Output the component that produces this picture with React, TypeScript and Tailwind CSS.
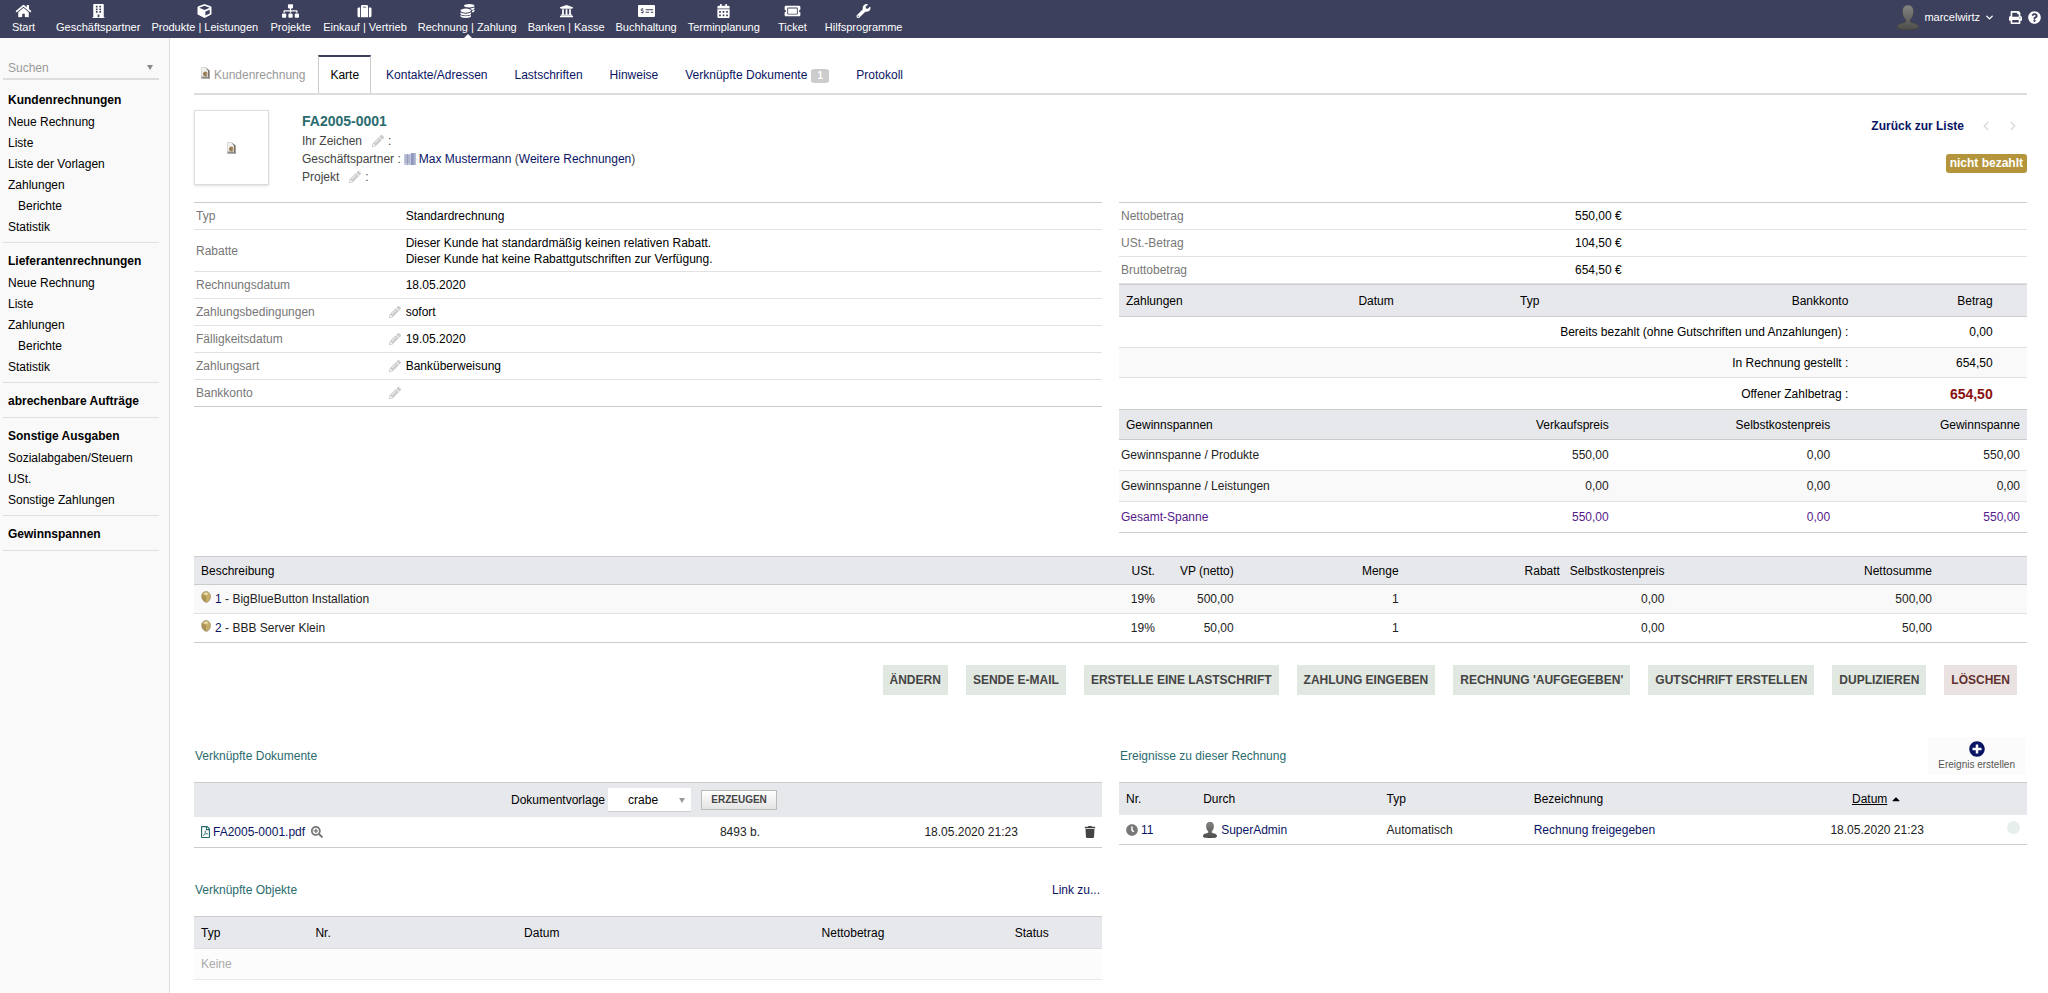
import { ReactNode, useState } from 'react'
import { ChevronDown, ChevronLeft, ChevronRight } from 'lucide-react'
import {
  FaBuilding,
  FaCalendarAlt,
  FaCaretUp,
  FaClock,
  FaCoins,
  FaCube,
  FaHome,
  FaMoneyCheckAlt,
  FaPencilAlt,
  FaPlusCircle,
  FaPrint,
  FaQuestionCircle,
  FaRegFilePdf,
  FaSearchPlus,
  FaSitemap,
  FaSuitcase,
  FaTicketAlt,
  FaTrash,
  FaUniversity,
  FaWrench,
} from 'react-icons/fa'

const navItems = [
  { label: 'Start', icon: FaHome },
  { label: 'Geschäftspartner', icon: FaBuilding },
  { label: 'Produkte | Leistungen', icon: FaCube },
  { label: 'Projekte', icon: FaSitemap },
  { label: 'Einkauf | Vertrieb', icon: FaSuitcase },
  { label: 'Rechnung | Zahlung', icon: FaCoins, active: true },
  { label: 'Banken | Kasse', icon: FaUniversity },
  { label: 'Buchhaltung', icon: FaMoneyCheckAlt },
  { label: 'Terminplanung', icon: FaCalendarAlt },
  { label: 'Ticket', icon: FaTicketAlt },
  { label: 'Hilfsprogramme', icon: FaWrench },
]

const menuBlocks = [
  {
    title: 'Kundenrechnungen',
    items: ['Neue Rechnung', 'Liste', 'Liste der Vorlagen', 'Zahlungen', 'Berichte', 'Statistik'],
  },
  {
    title: 'Lieferantenrechnungen',
    items: ['Neue Rechnung', 'Liste', 'Zahlungen', 'Berichte', 'Statistik'],
  },
  { title: 'abrechenbare Aufträge', items: [] },
  { title: 'Sonstige Ausgaben', items: ['Sozialabgaben/Steuern', 'USt.', 'Sonstige Zahlungen'] },
  { title: 'Gewinnspannen', items: [] },
]

const tabs = ['Karte', 'Kontakte/Adressen', 'Lastschriften', 'Hinweise', 'Verknüpfte Dokumente', 'Protokoll']

const details: { label: string; value: ReactNode; edit?: boolean }[] = [
  { label: 'Typ', value: 'Standardrechnung' },
  {
    label: 'Rabatte',
    value: (
      <>
        Dieser Kunde hat standardmäßig keinen relativen Rabatt.
        <br />
        Dieser Kunde hat keine Rabattgutschriften zur Verfügung.
      </>
    ),
  },
  { label: 'Rechnungsdatum', value: '18.05.2020' },
  { label: 'Zahlungsbedingungen', value: 'sofort', edit: true },
  { label: 'Fälligkeitsdatum', value: '19.05.2020', edit: true },
  { label: 'Zahlungsart', value: 'Banküberweisung', edit: true },
  { label: 'Bankkonto', value: '', edit: true },
]

const amounts = [
  ['Nettobetrag', '550,00 €'],
  ['USt.-Betrag', '104,50 €'],
  ['Bruttobetrag', '654,50 €'],
]

const margins = [
  ['Gewinnspanne / Produkte', '550,00', '0,00', '550,00'],
  ['Gewinnspanne / Leistungen', '0,00', '0,00', '0,00'],
  ['Gesamt-Spanne', '550,00', '0,00', '550,00'],
]

const lines = [
  { id: '1', name: 'BigBlueButton Installation', vat: '19%', price: '500,00', qty: '1', cost: '0,00', total: '500,00' },
  { id: '2', name: 'BBB Server Klein', vat: '19%', price: '50,00', qty: '1', cost: '0,00', total: '50,00' },
]

const actions = [
  'ÄNDERN',
  'SENDE E-MAIL',
  'ERSTELLE EINE LASTSCHRIFT',
  'ZAHLUNG EINGEBEN',
  "RECHNUNG 'AUFGEGEBEN'",
  'GUTSCHRIFT ERSTELLEN',
  'DUPLIZIEREN',
]

const tableClass = 'w-full table-fixed border-separate border-spacing-0'
const headClass = 'bg-[#e7e8ec] px-[7px] font-normal text-black'
const linkClass = 'text-[#0a1464]'

const Avatar = ({ className }: { className: string }) => (
  <svg viewBox="0 0 22 25" className={className} aria-hidden="true">
    <defs>
      <linearGradient id="avatar" x1="0" y1="0" x2="0" y2="1">
        <stop offset="0" stopColor="#858585" />
        <stop offset="1" stopColor="#4c4d49" />
      </linearGradient>
    </defs>
    <path
      d="M11 0C7 0 5.200 3 5.400 7c.200 3.500 1.400 6 3.100 7.500v2.300C7 18.300 1.500 17.800.300 21c-.8 2.500 1 4 10.700 4s11.500-1.500 10.700-4c-1.200-3.200-6.700-2.700-8.200-4.200v-2.300c1.700-1.500 2.900-4 3.100-7.500C16.800 3 15 0 11 0z"
      fill="url(#avatar)"
      stroke="#3d3e3b"
      strokeWidth=".6"
    />
  </svg>
)

// 請求書アイコン
const BillIcon = ({ className }: { className: string }) => (
  <svg viewBox="0 0 9 12" className={className} aria-hidden="true">
    <path d="M.5.5h4l4 3v8h-8z" fill="#f1f1f0" stroke="#c4c4c2" strokeWidth=".6" />
    <path d="M4.500.5 8.500 3.500v8h-1.500V4z" fill="#77736c" />
    <path d="M.5 9.500h8v2h-8z" fill="#8d8a84" />
    <circle cx="4.300" cy="7" r="2.400" fill="#b99a70" />
    <path d="M5.500 5.600c-1.500-.8-2.500.2-2.500 1.400s1 2.200 2.500 1.400M2.600 7h2.200" fill="none" stroke="#6b5436" strokeWidth=".6" />
  </svg>
)

const CompanyIcon = () => (
  <svg viewBox="0 0 12 12" className="w-3 h-3 inline-block" aria-hidden="true">
    <path d="M0 1h7v11H0z" fill="#c3c7de" />
    <path d="M1 3h5M1 5h5M1 7h5M1 9h5M3.500 1v11" stroke="#8d93b5" strokeWidth=".7" />
    <path d="M7 0h4.500v12H7z" fill="#8f96bd" />
    <path d="M9.500 0h2v12h-2z" fill="#a9afcf" />
  </svg>
)

const ProductIcon = () => (
  <svg viewBox="0 0 10 12" className="w-[10px] h-3 shrink-0 mb-1" aria-hidden="true">
    <path d="M5 .5C7.500.5 9.500 2.500 9.500 5.500S7.500 11 5.500 11.500C3 11 .8 8.500.6 5.500.5 2.500 2.500.5 5 .5z" fill="#c7ad68" stroke="#8e8361" strokeWidth=".6" />
    <path d="M1 3.600 5 5v6.200C2.800 10.500 1.200 8.500 1 6z" fill="#a99355" />
    <path d="M2 2.800 5 1.300l2.800 1.500L5 4.300z" fill="#e9dcae" />
  </svg>
)

const Pencil = () => <FaPencilAlt className="w-3 h-3 text-[#cccccc]" />

const SectionTitle = ({ title, children }: { title: string; children?: ReactNode }) => (
  <div className="flex justify-between items-center h-[38px] mb-[7px] pl-px pr-[2px]">
    <h2 className="text-[12px] text-[#2a6b6e]">{title}</h2>
    {children}
  </div>
)

const TopBar = () => (
  <header className="flex justify-between h-[38px] bg-[#3c405c] text-white text-[11px]">
    <nav className="flex -ml-[3px]">
      {navItems.map(({ label, icon: Icon, active }) => (
        <a
          key={label}
          href="#"
          className="relative flex flex-col items-center min-w-[54px] pl-[5px] pr-[6px] pt-1 whitespace-nowrap"
        >
          <Icon className="h-[14px] w-[17px]" />
          <span className="leading-4 mt-px">{label}</span>
          {active && (
            <span className="absolute bottom-0 left-1/2 -translate-x-1/2 border-x-4 border-b-4 border-x-transparent border-b-white" />
          )}
        </a>
      ))}
    </nav>
    <div className="flex items-center pr-[7px] pb-1">
      <Avatar className="w-[22px] h-[25px]" />
      <button type="button" className="flex items-center gap-1 ml-[5px] mr-[14px]">
        marcelwirtz
        <ChevronDown size={11} strokeWidth={3} />
      </button>
      <a href="#" aria-label="Drucken" className="mr-[6px]">
        <FaPrint size={13} />
      </a>
      <a href="#" aria-label="Hilfe">
        <FaQuestionCircle size={13} />
      </a>
    </div>
  </header>
)

const SideMenu = () => (
  <aside className="w-[170px] shrink-0 bg-[#f9f9f9] border-r border-[#dcdcdc] pl-[3px] pr-[10px] pt-[19px]">
    <div className="relative border-b-2 border-[#dddddd] mb-[2px]">
      <select
        aria-label="Suchen"
        className="appearance-none w-full h-[21px] pl-[5px] bg-transparent text-[#999999] outline-none"
      >
        <option>Suchen</option>
      </select>
      <span className="absolute right-[6px] top-2 border-x-[3px] border-t-[5px] border-x-transparent border-t-[#888888] pointer-events-none" />
    </div>
    {menuBlocks.map((block) => (
      <div key={block.title} className="border-b border-[#e0e0e0] pt-[7px] pb-1 pl-[5px]">
        <a href="#" className="block h-[23px] leading-[22px] font-bold whitespace-nowrap">
          {block.title}
        </a>
        {block.items.map((item) => (
          <a
            key={item}
            href="#"
            className={`block h-[21px] leading-[21px] whitespace-nowrap ${item === 'Berichte' ? 'pl-[10px]' : ''}`}
          >
            {item}
          </a>
        ))}
      </div>
    ))}
  </aside>
)

const App = () => {
  const [template, setTemplate] = useState('crabe')

  return (
    <div className="min-h-screen flex flex-col bg-white text-black text-[12px] leading-4 font-['Liberation_Sans',Arial,sans-serif]">
      <TopBar />
      <div className="flex flex-1">
        <SideMenu />
        <main className="flex-1 min-w-0 pl-6 pr-[21px] pt-[17px] pb-3">
          <div className="flex gap-[3px] border-b-2 border-[#dddddd]">
            <div className="flex items-center gap-1 h-[38px] pt-[2px] pl-[7px] pr-[10px] text-[#999999]">
              <BillIcon className="w-[9px] h-3 mb-1" />
              Kundenrechnung
            </div>
            {tabs.map((tab) => (
              <a
                key={tab}
                href="#"
                className={
                  tab === 'Karte'
                    ? 'flex items-center h-[38px] px-[11px] border-t-2 border-t-[#3c405c] border-x border-x-[#cccccc]'
                    : 'flex items-center h-[38px] pt-[2px] px-3 text-[#0a1464]'
                }
              >
                {tab}
                {tab === 'Verknüpfte Dokumente' && (
                  <span className="ml-1 mt-px w-[18px] h-[14px] rounded-[3px] bg-[#cccccc] text-white text-[10px] leading-[14px] font-bold text-center">
                    1
                  </span>
                )}
              </a>
            ))}
          </div>

          <div className="flex mt-[15px] h-[75px]">
            <div className="flex items-center justify-center w-[75px] h-[75px] border border-[#dddddd] shadow-sm">
              <BillIcon className="w-[9px] h-3" />
            </div>
            <div className="ml-[33px] text-[#444444] leading-[18px]">
              <h1 className="h-[22px] leading-[22px] text-[14px] font-bold text-[#2a6b6e]">FA2005-0001</h1>
              <div className="flex items-center">
                Ihr Zeichen
                <a href="#" aria-label="Ihr Zeichen bearbeiten" className="ml-[10px] mr-1">
                  <Pencil />
                </a>
                :
              </div>
              <div className="flex items-center">
                Geschäftspartner :
                <span className="mx-[3px] flex">
                  <CompanyIcon />
                </span>
                <a href="#" className={linkClass}>
                  Max Mustermann
                </a>
                &nbsp;(
                <a href="#" className={linkClass}>
                  Weitere Rechnungen
                </a>
                )
              </div>
              <div className="flex items-center">
                Projekt
                <a href="#" aria-label="Projekt bearbeiten" className="ml-[10px] mr-1">
                  <Pencil />
                </a>
                :
              </div>
            </div>
            <div className="ml-auto flex flex-col items-end">
              <div className="flex items-center h-8 pr-[7px]">
                <a href="#" className="font-bold text-[#0a1464] mr-[15px]">
                  Zurück zur Liste
                </a>
                <ChevronLeft size={14} strokeWidth={3} className="text-[#dddddd] mr-[13px]" />
                <ChevronRight size={14} strokeWidth={3} className="text-[#dddddd]" />
              </div>
              <span className="mt-3 px-1 h-[19px] leading-[19px] rounded-[3px] bg-[#b5953c] text-white font-bold">
                nicht bezahlt
              </span>
            </div>
          </div>

          <div className="flex gap-[17px] mt-[17px] items-start">
            <table className={`${tableClass} flex-1 border-t border-[#cccccc]`}>
              <colgroup>
                <col className="w-[23.2%]" />
                <col />
              </colgroup>
              <tbody>
                {details.map((row, i) => (
                  <tr key={row.label} className={row.label === 'Rabatte' ? 'h-[42px]' : 'h-[27px]'}>
                    <td
                      className={`border-b pl-[2px] pr-1 text-[#777777] ${i === details.length - 1 ? 'border-[#cccccc]' : 'border-[#e2e2e2]'}`}
                    >
                      <div className="flex justify-between items-center">
                        {row.label}
                        {row.edit && (
                          <a href="#" aria-label={`${row.label} bearbeiten`}>
                            <Pencil />
                          </a>
                        )}
                      </div>
                    </td>
                    <td className={`border-b pl-px ${i === details.length - 1 ? 'border-[#cccccc]' : 'border-[#e2e2e2]'}`}>
                      {row.value}
                    </td>
                  </tr>
                ))}
              </tbody>
            </table>

            <div className="w-full flex-1">
              <table className={`${tableClass} border-t border-[#cccccc]`}>
                <tbody>
                  {amounts.map(([label, value]) => (
                    <tr key={label} className="h-[27px]">
                      <td className="border-b border-[#e2e2e2] pl-[2px] text-[#777777]">{label}</td>
                      <td className="border-b border-[#e2e2e2] pl-[2px]">{value}</td>
                    </tr>
                  ))}
                </tbody>
              </table>

              <table className={tableClass}>
                <colgroup>
                  <col className="w-[25.6%]" />
                  <col className="w-[17.8%]" />
                  <col className="w-[17.6%]" />
                  <col className="w-[20.1%]" />
                  <col className="w-[15.9%]" />
                  <col />
                </colgroup>
                <thead>
                  <tr className="h-[33px]">
                    <th className={`${headClass} border-y border-[#cccccc] text-left`}>Zahlungen</th>
                    <th className={`${headClass} border-y border-[#cccccc] text-left`}>Datum</th>
                    <th className={`${headClass} border-y border-[#cccccc] text-left`}>Typ</th>
                    <th className={`${headClass} border-y border-[#cccccc] text-right`}>Bankkonto</th>
                    <th className={`${headClass} border-y border-[#cccccc] text-right`}>Betrag</th>
                    <th className={`${headClass} border-y border-[#cccccc]`} />
                  </tr>
                </thead>
                <tbody>
                  <tr className="h-[31px] text-right">
                    <td colSpan={4} className="border-b border-[#e2e2e2] px-[7px]">
                      Bereits bezahlt (ohne Gutschriften und Anzahlungen) :
                    </td>
                    <td className="border-b border-[#e2e2e2] px-[7px]">0,00</td>
                    <td className="border-b border-[#e2e2e2]" />
                  </tr>
                  <tr className="h-[30px] text-right bg-[#f9f9f9]">
                    <td colSpan={4} className="border-b border-[#e2e2e2] px-[7px]">
                      In Rechnung gestellt :
                    </td>
                    <td className="border-b border-[#e2e2e2] px-[7px]">654,50</td>
                    <td className="border-b border-[#e2e2e2]" />
                  </tr>
                  <tr className="h-[31px] text-right">
                    <td colSpan={4} className="px-[7px]">
                      Offener Zahlbetrag :
                    </td>
                    <td className="px-[7px] text-[14px] font-bold text-[#8a1010]">654,50</td>
                    <td />
                  </tr>
                </tbody>
              </table>

              <table className={tableClass}>
                <colgroup>
                  <col className="w-[30.3%]" />
                  <col className="w-[24.4%]" />
                  <col className="w-[24.4%]" />
                  <col />
                </colgroup>
                <thead>
                  <tr className="h-[31px]">
                    <th className={`${headClass} border-y border-[#cccccc] text-left`}>Gewinnspannen</th>
                    <th className={`${headClass} border-y border-[#cccccc] text-right`}>Verkaufspreis</th>
                    <th className={`${headClass} border-y border-[#cccccc] text-right`}>Selbstkostenpreis</th>
                    <th className={`${headClass} border-y border-[#cccccc] text-right`}>Gewinnspanne</th>
                  </tr>
                </thead>
                <tbody>
                  {margins.map((row, i) => (
                    <tr
                      key={row[0]}
                      className={`h-[31px] ${i === 1 ? 'bg-[#f9f9f9]' : ''} ${i === 2 ? 'text-[#551a8b]' : 'text-[#222222]'}`}
                    >
                      {row.map((cell, j) => (
                        <td
                          key={j}
                          className={`border-b ${i === 2 ? 'border-[#cccccc]' : 'border-[#e2e2e2]'} ${j === 0 ? 'pl-[2px]' : 'px-[7px] text-right'}`}
                        >
                          {cell}
                        </td>
                      ))}
                    </tr>
                  ))}
                </tbody>
              </table>
            </div>
          </div>

          <table className={`${tableClass} mt-[23px] border-t border-[#cccccc]`}>
            <colgroup>
              <col />
              <col className="w-[4%]" />
              <col className="w-[4.3%]" />
              <col className="w-[9%]" />
              <col className="w-[8.8%]" />
              <col className="w-[5.7%]" />
              <col className="w-[14.6%]" />
              <col className="w-[4.8%]" />
            </colgroup>
            <thead>
              <tr className="h-7 text-right">
                <th className={`${headClass} border-b border-[#cccccc] text-left`}>Beschreibung</th>
                {['USt.', 'VP (netto)', 'Menge', 'Rabatt', 'Selbstkostenpreis', 'Nettosumme', ''].map((head) => (
                  <th key={head} className="bg-[#e7e8ec] border-b border-[#cccccc] pr-[7px] font-normal whitespace-nowrap">
                    <div className="flex justify-end">{head}</div>
                  </th>
                ))}
              </tr>
            </thead>
            <tbody>
              {lines.map((line, i) => (
                <tr key={line.id} className={`h-[29px] text-[#222222] ${i === 0 ? 'bg-[#f9f9f9]' : ''}`}>
                  <td className={`border-b px-[7px] ${i === 0 ? 'border-[#e2e2e2]' : 'border-[#cccccc]'}`}>
                    <div className="flex items-center">
                      <ProductIcon />
                      <span className="ml-1">
                        <a href="#" className={linkClass}>
                          {line.id}
                        </a>{' '}
                        - {line.name}
                      </span>
                    </div>
                  </td>
                  {[line.vat, line.price, line.qty, '', line.cost, line.total, ''].map((cell, j) => (
                    <td
                      key={j}
                      className={`border-b px-[7px] text-right ${i === 0 ? 'border-[#e2e2e2]' : 'border-[#cccccc]'}`}
                    >
                      {cell}
                    </td>
                  ))}
                </tr>
              ))}
            </tbody>
          </table>

          <div className="flex justify-end gap-[18px] mt-[22px] pr-[10px] font-bold">
            {actions.map((action) => (
              <button key={action} type="button" className="h-[30px] px-[7px] bg-[#e1e7e1] text-[#444444] whitespace-nowrap">
                {action}
              </button>
            ))}
            <button type="button" className="h-[30px] px-[7px] bg-[#e9e2e1] text-[#633030]">
              LÖSCHEN
            </button>
          </div>

          <div className="flex gap-[17px] mt-[42px] items-start">
            <div className="flex-1 min-w-0">
              <SectionTitle title="Verknüpfte Dokumente" />
              <table className={`${tableClass} border-t border-[#cccccc]`}>
                <colgroup>
                  <col />
                  <col className="w-[20%]" />
                  <col className="w-[28.4%]" />
                  <col className="w-[8.5%]" />
                </colgroup>
                <thead>
                  <tr className="h-[34px]">
                    <th colSpan={4} className="bg-[#e7e8ec] font-normal">
                      <div className="flex items-center justify-center pr-2">
                        <label htmlFor="model">Dokumentvorlage</label>
                        <span className="relative ml-[3px] mr-[10px]">
                          <select
                            id="model"
                            value={template}
                            onChange={(e) => setTemplate(e.target.value)}
                            className="appearance-none w-[83px] h-6 pl-5 bg-white border-b border-[#cccccc] outline-none"
                          >
                            <option value="crabe">crabe</option>
                          </select>
                          <span className="absolute right-[6px] top-[10px] border-x-[3px] border-t-[5px] border-x-transparent border-t-[#999999] pointer-events-none" />
                        </span>
                        <button
                          type="button"
                          className="w-[76px] h-5 border border-[#bbbbbb] bg-linear-to-b from-white to-[#e4e4e4] text-[10px] font-bold text-[#444444]"
                        >
                          ERZEUGEN
                        </button>
                      </div>
                    </th>
                  </tr>
                </thead>
                <tbody>
                  <tr className="h-[31px] text-[#222222]">
                    <td className="border-b border-[#cccccc] px-[7px]">
                      <div className="flex items-center">
                        <FaRegFilePdf className="w-[9px] h-3 text-[#2a6b6e]" />
                        <a href="#" className="ml-[3px] text-[#0a1464]">
                          FA2005-0001.pdf
                        </a>
                        <a href="#" aria-label="Vorschau" className="ml-[6px] text-[#777777]">
                          <FaSearchPlus size={12} />
                        </a>
                      </div>
                    </td>
                    <td className="border-b border-[#cccccc] px-[7px] text-right">8493 b.</td>
                    <td className="border-b border-[#cccccc] px-[7px] text-right">18.05.2020 21:23</td>
                    <td className="border-b border-[#cccccc] pr-[6px]">
                      <button type="button" aria-label="Löschen" className="block ml-auto text-[#444444]">
                        <FaTrash size={12} />
                      </button>
                    </td>
                  </tr>
                </tbody>
              </table>

              <div className="mt-[23px]">
                <SectionTitle title="Verknüpfte Objekte">
                  <a href="#" className={linkClass}>
                    Link zu...
                  </a>
                </SectionTitle>
              </div>
              <table className={`${tableClass} border-t border-[#cccccc]`}>
                <colgroup>
                  <col className="w-[12.6%]" />
                  <col className="w-[13.9%]" />
                  <col className="w-[23.6%]" />
                  <col className="w-[26.7%]" />
                  <col className="w-[18.1%]" />
                  <col />
                </colgroup>
                <thead>
                  <tr className="h-8">
                    <th className={`${headClass} border-b border-[#dddddd] text-left`}>Typ</th>
                    <th className={`${headClass} border-b border-[#dddddd] text-left`}>Nr.</th>
                    <th className={`${headClass} border-b border-[#dddddd] text-center`}>Datum</th>
                    <th className={`${headClass} border-b border-[#dddddd] text-right`}>Nettobetrag</th>
                    <th className={`${headClass} border-b border-[#dddddd] text-right`}>Status</th>
                    <th className={`${headClass} border-b border-[#dddddd]`} />
                  </tr>
                </thead>
                <tbody>
                  <tr className="h-[31px] bg-[#fcfcfc]">
                    <td colSpan={6} className="border-b border-[#e8e8e8] px-[7px] text-[#aaaaaa]">
                      Keine
                    </td>
                  </tr>
                </tbody>
              </table>
            </div>

            <div className="flex-1 min-w-0">
              <SectionTitle title="Ereignisse zu dieser Rechnung">
                <a
                  href="#"
                  className="flex flex-col items-center h-[38px] px-[10px] pt-1 bg-[#fbfbfb] text-[10px] text-[#555555]"
                >
                  <FaPlusCircle size={16} className="text-[#0a1464]" />
                  Ereignis erstellen
                </a>
              </SectionTitle>
              <table className={`${tableClass} border-t border-[#cccccc]`}>
                <colgroup>
                  <col className="w-[8.5%]" />
                  <col className="w-[20.2%]" />
                  <col className="w-[16.2%]" />
                  <col className="w-[25.6%]" />
                  <col className="w-[26%]" />
                  <col />
                </colgroup>
                <thead>
                  <tr className="h-8">
                    <th className={`${headClass} text-left`}>Nr.</th>
                    <th className={`${headClass} text-left`}>Durch</th>
                    <th className={`${headClass} text-left`}>Typ</th>
                    <th className={`${headClass} text-left`}>Bezeichnung</th>
                    <th className={headClass}>
                      <a href="#" className="inline-flex items-center gap-[3px]">
                        <span className="underline">Datum</span>
                        <FaCaretUp size={12} />
                      </a>
                    </th>
                    <th className={headClass} />
                  </tr>
                </thead>
                <tbody>
                  <tr className="h-[30px] text-[#222222]">
                    <td className="border-b border-[#cccccc] px-[7px]">
                      <a href="#" className="flex items-center gap-[3px] text-[#0a1464]">
                        <FaClock size={12} className="text-[#777777]" />
                        11
                      </a>
                    </td>
                    <td className="border-b border-[#cccccc] px-[7px]">
                      <a href="#" className="flex items-center gap-1 text-[#0a1464]">
                        <Avatar className="w-[14px] h-4" />
                        SuperAdmin
                      </a>
                    </td>
                    <td className="border-b border-[#cccccc] px-[7px]">Automatisch</td>
                    <td className="border-b border-[#cccccc] px-[7px]">
                      <a href="#" className={linkClass}>
                        Rechnung freigegeben
                      </a>
                    </td>
                    <td className="border-b border-[#cccccc] px-[7px] text-center">18.05.2020 21:23</td>
                    <td className="border-b border-[#cccccc] pr-[7px]">
                      <div className="w-[13px] h-[13px] mb-1 ml-auto rounded-full bg-[#e7efed]" />
                    </td>
                  </tr>
                </tbody>
              </table>
            </div>
          </div>
        </main>
      </div>
    </div>
  )
}

export default App
